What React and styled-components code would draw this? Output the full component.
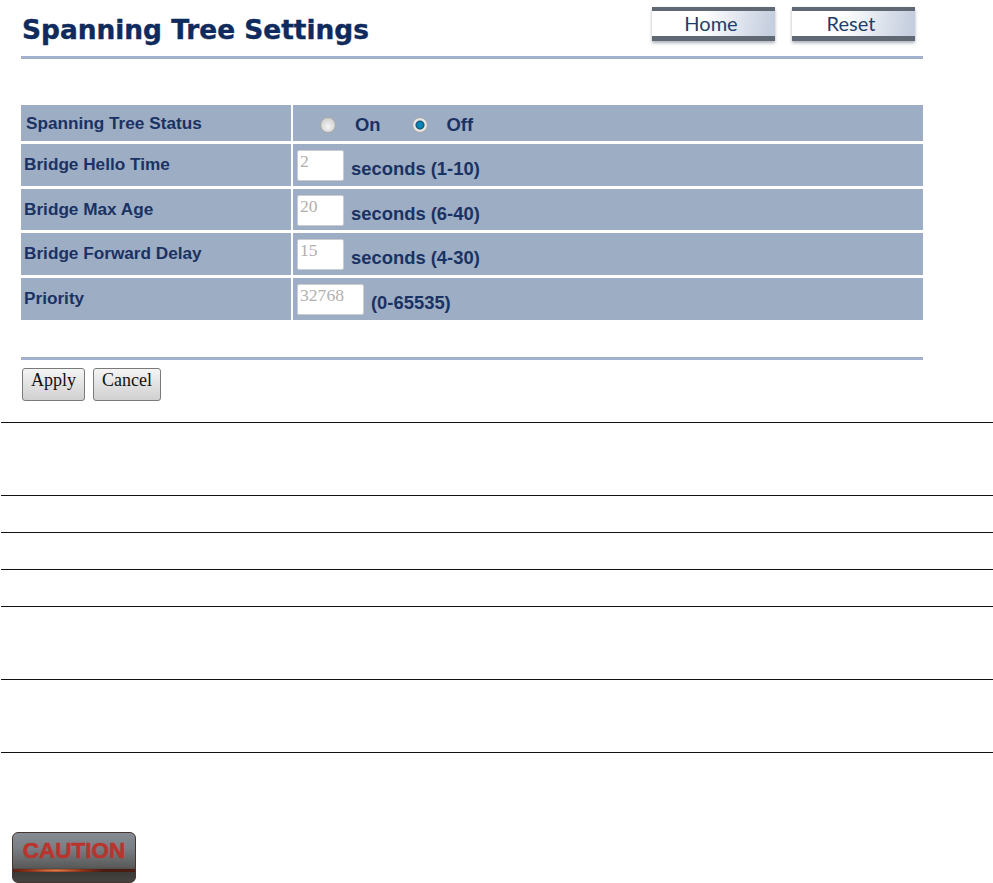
import React from "react";
import styled, { createGlobalStyle } from "styled-components";

const GlobalStyle = createGlobalStyle`
	html, body {
		margin: 0;
		height: 883px;
		overflow: hidden;
		background: #fff;
	}
`;

const ROWS = [
	{ label: "Spanning Tree Status", height: 36, radio: true },
	{ label: "Bridge Hello Time", height: 42, value: "2", hint: "seconds (1-10)" },
	{ label: "Bridge Max Age", height: 41, value: "20", hint: "seconds (6-40)" },
	{ label: "Bridge Forward Delay", height: 42, value: "15", hint: "seconds (4-30)" },
	{ label: "Priority", height: 42, value: "32768", hint: "(0-65535)", wide: true },
];

const LINE_GAPS = [73, 37, 37, 37, 73, 73, 1];

function App() {
	return (
		<Page>
			<GlobalStyle />
			<Panel>
				<Header>
					<Title>Spanning Tree Settings</Title>
					<NavButtons>
						<NavButton>Home</NavButton>
						<NavButton>Reset</NavButton>
					</NavButtons>
				</Header>
				<SettingsGrid>
					{ROWS.map((row) => (
						<Row key={row.label} $height={row.height}>
							<LabelCell $radio={row.radio}>{row.label}</LabelCell>
							<ValueCell>
								{row.radio ? (
									<RadioGroup>
										<RadioLabel>
											<Radio name="stp" />
											On
										</RadioLabel>
										<RadioLabel>
											<Radio name="stp" defaultChecked />
											Off
										</RadioLabel>
									</RadioGroup>
								) : (
									<>
										<NumberInput disabled defaultValue={row.value} $wide={row.wide} />
										<Hint>{row.hint}</Hint>
									</>
								)}
							</ValueCell>
						</Row>
					))}
				</SettingsGrid>
				<Footer>
					<FormButton>Apply</FormButton>
					<FormButton>Cancel</FormButton>
				</Footer>
			</Panel>
			<Lines>
				{LINE_GAPS.map((gap, index) => (
					<Line key={index} $height={gap} />
				))}
			</Lines>
			<CautionBadge>
				<CautionText>CAUTION</CautionText>
				<CautionGlow />
			</CautionBadge>
		</Page>
	);
}

export default App;

const Page = styled.div`
	width: 993px;
	height: 883px;
	overflow: hidden;
	display: flex;
	flex-direction: column;
	color: #1a3263;
`;

const Panel = styled.div`
	width: 902px;
	margin-left: 21px;
	height: 422px;
	flex: none;
`;

const Header = styled.div`
	height: 56px;
	display: flex;
	justify-content: space-between;
	border-bottom: 3px solid #a2b2cb;
`;

const Title = styled.h1`
	margin: 14px 0 0 1px;
	font: bold 26.4px/32px "DejaVu Sans", Verdana, sans-serif;
	color: #0f2a5c;
	-webkit-text-stroke: 0.4px #0f2a5c;
`;

const NavButtons = styled.div`
	display: flex;
	gap: 17px;
	padding: 7px 8px 0 0;
`;

const NavButton = styled.div`
	width: 123px;
	height: 34px;
	box-sizing: border-box;
	padding-right: 5px;
	border-top: 4px solid #5f6873;
	border-bottom: 5px solid #5f6873;
	background: linear-gradient(100deg, #fff 40%, #c6cfdf 95%);
	box-shadow: 0 2px 3px rgba(90, 100, 120, 0.5);
	text-align: center;
	font: 20px/25px Lato, sans-serif;
	color: #1f3d68;
`;

const SettingsGrid = styled.div`
	margin-top: 46px;
	display: flex;
	flex-direction: column;
	gap: 3px;
`;

const Row = styled.div`
	height: ${(p) => p.$height}px;
	display: flex;
	gap: 2.5px;
`;

const LabelCell = styled.div`
	width: 269.5px;
	flex: none;
	box-sizing: border-box;
	background: #9dadc4;
	padding: ${(p) => (p.$radio ? "8px 0 0 5px" : "10px 0 0 3px")};
	font: bold 17.2px/20px "Liberation Sans", Arial, sans-serif;
	color: #1a3263;
`;

const ValueCell = styled.div`
	flex: 1;
	background: #9dadc4;
	display: flex;
	align-items: flex-start;
	padding-left: 4px;
`;

const RadioGroup = styled.div`
	display: flex;
	gap: 31px;
	padding: 8px 0 0 23px;
`;

const RadioLabel = styled.label`
	display: flex;
	align-items: center;
	gap: 19px;
	font: bold 18.4px/24px "Liberation Sans", Arial, sans-serif;
	color: #1a3263;
`;

const Radio = styled.input.attrs({ type: "radio" })`
	appearance: none;
	width: 16px;
	height: 16px;
	margin: 0;
	border-radius: 50%;
	border: 1px solid #a8a8a8;
	background: radial-gradient(circle at 50% 60%, #f4f4f4, #c4c4c4);

	&:checked {
		background: radial-gradient(circle, #0b86b8 0 2.5px, #15506f 4px, #e8e8e8 5px, #d0d0d0 100%);
	}
`;

const NumberInput = styled.input.attrs({ type: "text" })`
	width: ${(p) => (p.$wide ? 67 : 47)}px;
	height: 31px;
	box-sizing: border-box;
	margin: 6px 0 0;
	padding: 0 0 9px 2px;
	border: 1px solid #c9cdd2;
	border-radius: 2px;
	background: #fff;
	font: 17.6px "Liberation Serif", serif;
	color: #b0b0b0;
	-webkit-text-fill-color: #b0b0b0;
	opacity: 1;
`;

const Hint = styled.span`
	margin: 14px 0 0 7px;
	font: bold 18.4px/22px "Liberation Sans", Arial, sans-serif;
	color: #1a3263;
`;

const Footer = styled.div`
	margin-top: 37px;
	padding: 8px 0 0 1px;
	border-top: 3px solid #a2b2cb;
	display: flex;
	gap: 8px;
`;

const FormButton = styled.button`
	height: 33px;
	padding: 0 8px 8px;
	border: 1.5px solid #7a7a7a;
	border-radius: 3px;
	background: linear-gradient(#f4f4f4, #d0d0d0);
	font: 18px "Liberation Serif", serif;
	color: #111;
`;

const Lines = styled.div`
	margin-left: 1px;
	display: flex;
	flex-direction: column;
`;

const Line = styled.div`
	height: ${(p) => p.$height}px;
	box-sizing: border-box;
	border-top: 1px solid #111;
`;

const CautionBadge = styled.div`
	position: relative;
	flex: none;
	width: 124px;
	height: 51px;
	margin: 79px 0 0 12px;
	box-sizing: border-box;
	border: 1px solid #47352f;
	border-radius: 6px;
	background: linear-gradient(#868c93 0%, #7a7f85 30%, #5a5a59 70%, #3c3a38 78%, #45423f 100%);
	text-align: center;
	overflow: hidden;
`;

const CautionText = styled.div`
	font: bold 22.5px/35px "Liberation Sans", Arial, sans-serif;
	color: #b8342c;
	-webkit-text-stroke: 0.5px #b8342c;
`;

const CautionGlow = styled.div`
	position: absolute;
	left: 0;
	right: 0;
	top: 36px;
	height: 3px;
	background: radial-gradient(ellipse 40% 100% at 35% 50%, #e8824d 0%, #8a3018 60%, #4a1c12 100%);
`;
